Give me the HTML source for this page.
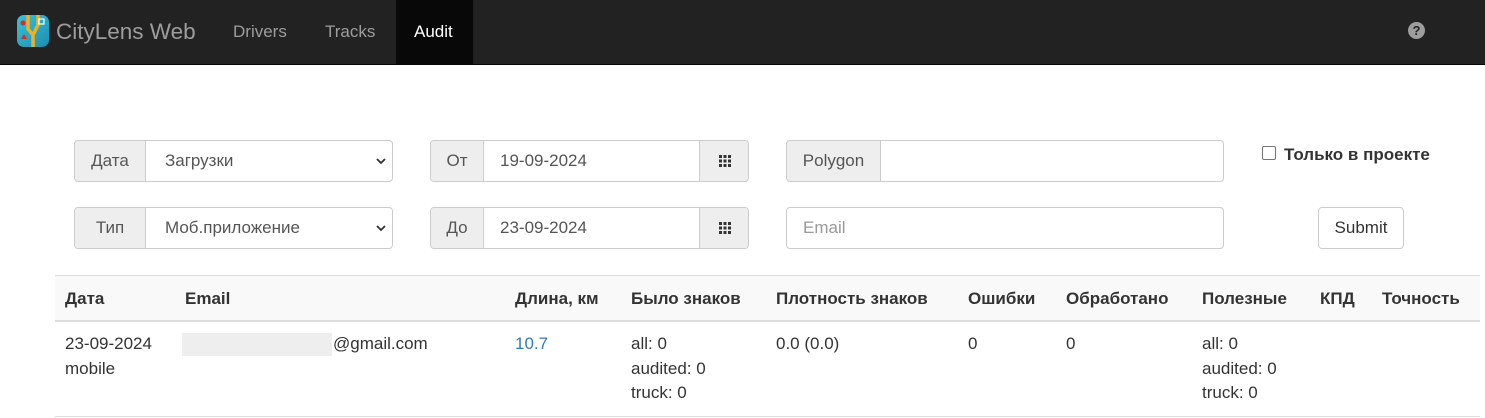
<!DOCTYPE html>
<html><head><meta charset="utf-8"><style>
*{box-sizing:border-box;margin:0;padding:0}
body{width:1485px;height:418px;background:#fff;font-family:"Liberation Sans",Arial,sans-serif;font-size:17px;color:#333;position:relative;overflow:hidden}
.nav{position:absolute;left:0;top:0;width:1485px;height:65px;background:#222;border-bottom:1px solid #080808}
.a{position:absolute}
.nav .l{position:absolute;top:0;height:64px;line-height:64px;color:#9d9d9d;font-size:17px}
.box{position:absolute;border:1px solid #ccc;border-radius:4px;background:#fff;height:42px;overflow:hidden}
.ad{position:absolute;top:0;height:40px;background:#eee;line-height:40px;color:#555;text-align:center}
.t{position:absolute;line-height:40px;color:#555}
.th{position:absolute;top:289px;font-weight:bold;color:#333;line-height:20px}
.td{position:absolute;top:332px;line-height:24.5px}
.ch{position:absolute;left:300px;top:15px}
</style></head><body>
<div class="nav">
 <svg class="a" style="left:17px;top:15px" width="32" height="32" viewBox="0 0 32 32"><defs><linearGradient id="g" x1="0" y1="0" x2="1" y2="1"><stop offset="0" stop-color="#3cc0d8"/><stop offset="1" stop-color="#1a8fb0"/></linearGradient></defs><rect width="32" height="32" rx="7" fill="url(#g)"/><path d="M11 0 L11 14 L16 20 L16 32 M21 0 L21 10 L16 20" stroke="#f0b020" stroke-width="3.5" fill="none"/><circle cx="6" cy="8" r="2.5" fill="#d03020"/><rect x="22" y="4" width="5" height="5" fill="none" stroke="#fff" stroke-width="1.2"/><path d="M4 24 L7 19 L10 24Z" fill="#d03020"/></svg>
 <div class="l" style="left:56px;font-size:22.5px">CityLens Web</div>
 <div class="l" style="left:233px">Drivers</div>
 <div class="l" style="left:325px">Tracks</div>
 <div class="a" style="left:396px;top:0;width:77px;height:64px;background:#080808"></div>
 <div class="l" style="left:414px;color:#fff">Audit</div>
 <div class="a" style="left:1408px;top:22px;width:17px;height:17px;border-radius:50%;background:#9d9d9d;color:#222;font-weight:bold;font-size:13px;line-height:17px;text-align:center">?</div>
</div>

<div class="box" style="left:74px;top:140px;width:319px"><div class="ad" style="left:0;width:71px;border-right:1px solid #ccc">Дата</div><div class="t" style="left:90px">Загрузки</div><svg class="ch" width="12" height="10" viewBox="0 0 12 10"><path d="M2 3 L6 7 L10 3" stroke="#333" stroke-width="1.8" fill="none"/></svg></div>
<div class="box" style="left:74px;top:207px;width:319px"><div class="ad" style="left:0;width:71px;border-right:1px solid #ccc">Тип</div><div class="t" style="left:90px">Моб.приложение</div><svg class="ch" width="12" height="10" viewBox="0 0 12 10"><path d="M2 3 L6 7 L10 3" stroke="#333" stroke-width="1.8" fill="none"/></svg></div>

<div class="box" style="left:430px;top:140px;width:319px"><div class="ad" style="left:0;width:53px;border-right:1px solid #ccc">От</div><div class="t" style="left:69px">19-09-2024</div><div class="ad" style="left:268px;width:50px;border-left:1px solid #ccc"><svg width="16" height="16" viewBox="0 0 16 16" style="vertical-align:-3px"><g fill="#333"><rect x="2" y="2" width="3" height="3"/><rect x="6.5" y="2" width="3" height="3"/><rect x="11" y="2" width="3" height="3"/><rect x="2" y="6.5" width="3" height="3"/><rect x="6.5" y="6.5" width="3" height="3"/><rect x="11" y="6.5" width="3" height="3"/><rect x="2" y="11" width="3" height="3"/><rect x="6.5" y="11" width="3" height="3"/><rect x="11" y="11" width="3" height="3"/></g></svg></div></div>
<div class="box" style="left:430px;top:207px;width:319px"><div class="ad" style="left:0;width:53px;border-right:1px solid #ccc">До</div><div class="t" style="left:69px">23-09-2024</div><div class="ad" style="left:268px;width:50px;border-left:1px solid #ccc"><svg width="16" height="16" viewBox="0 0 16 16" style="vertical-align:-3px"><g fill="#333"><rect x="2" y="2" width="3" height="3"/><rect x="6.5" y="2" width="3" height="3"/><rect x="11" y="2" width="3" height="3"/><rect x="2" y="6.5" width="3" height="3"/><rect x="6.5" y="6.5" width="3" height="3"/><rect x="11" y="6.5" width="3" height="3"/><rect x="2" y="11" width="3" height="3"/><rect x="6.5" y="11" width="3" height="3"/><rect x="11" y="11" width="3" height="3"/></g></svg></div></div>

<div class="box" style="left:786px;top:140px;width:438px"><div class="ad" style="left:0;width:94px;border-right:1px solid #ccc">Polygon</div></div>
<div class="box" style="left:786px;top:207px;width:438px"><div class="t" style="left:16px;color:#999">Email</div></div>

<div class="a" style="left:1262px;top:146px;width:14px;height:14px;border:1px solid #767676;border-radius:2px"></div>
<div class="a" style="left:1284px;top:145px;font-weight:bold;color:#333">Только в проекте</div>
<div class="a" style="left:1318px;top:207px;width:86px;height:42px;border:1px solid #ccc;border-radius:4px;text-align:center;line-height:40px">Submit</div>

<div class="a" style="left:55px;top:275px;width:1425px;height:47px;background:#f9f9f9;border-top:1px solid #ddd;border-bottom:2px solid #ddd"></div>
<div class="a" style="left:55px;top:416px;width:1425px;height:1px;background:#ddd"></div>
<div class="th" style="left:65px">Дата</div>
<div class="th" style="left:185px">Email</div>
<div class="th" style="left:515px">Длина, км</div>
<div class="th" style="left:631px">Было знаков</div>
<div class="th" style="left:776px">Плотность знаков</div>
<div class="th" style="left:968px">Ошибки</div>
<div class="th" style="left:1066px">Обработано</div>
<div class="th" style="left:1202px">Полезные</div>
<div class="th" style="left:1320px">КПД</div>
<div class="th" style="left:1382px">Точность</div>

<div class="td" style="left:65px">23-09-2024<br>mobile</div>
<div class="a" style="left:182px;top:333px;width:150px;height:23px;background:#eee"></div>
<div class="td" style="left:333px">@gmail.com</div>
<div class="td" style="left:515px;color:#337ab7">10.7</div>
<div class="td" style="left:631px">all: 0<br>audited: 0<br>truck: 0</div>
<div class="td" style="left:776px">0.0 (0.0)</div>
<div class="td" style="left:968px">0</div>
<div class="td" style="left:1066px">0</div>
<div class="td" style="left:1202px">all: 0<br>audited: 0<br>truck: 0</div>
</body></html>
